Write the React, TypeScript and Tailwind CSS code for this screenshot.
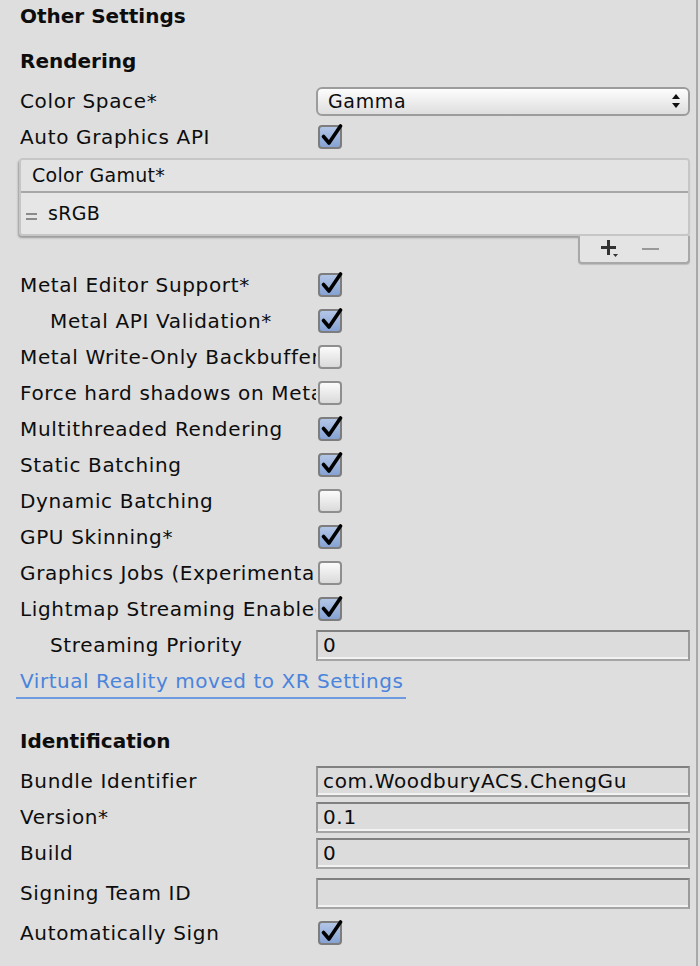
import React from "react";

const font = { fontFamily: '"DejaVu Sans", "Liberation Sans", sans-serif' };

function Check({ on }: { on: boolean }) {
  return (
    <div className="relative w-[24px] h-[24px]">
      <div
        className={
          on
            ? "w-[24px] h-[24px] rounded-[4px] border-2 border-[#7d7d7d] bg-gradient-to-b from-[#b3c6e6] to-[#86a2d3]"
            : "w-[24px] h-[24px] rounded-[4px] border-2 border-[#8e8e8e] bg-gradient-to-b from-[#fbfbfb] to-[#dadada]"
        }
      />
      {on && (
        <svg className="absolute left-[3px] top-[-2px]" width="24" height="24" viewBox="0 0 24 24">
          <path d="M2.5 13.5 L8 20 L19.5 3" fill="none" stroke="#000" strokeWidth="3.6" strokeLinecap="round" strokeLinejoin="round" />
        </svg>
      )}
    </div>
  );
}

function Label({ text, indent }: { text: string; indent?: boolean }) {
  return (
    <div className={"w-[296px] shrink-0 overflow-hidden whitespace-nowrap " + (indent ? "pl-[30px]" : "")}>
      {text}
    </div>
  );
}

function CheckRow({ label, on, indent }: { label: string; on: boolean; indent?: boolean }) {
  return (
    <div className="h-[36px] flex items-center pl-[20px]">
      <Label text={label} indent={indent} />
      <div className="pl-[2px]">
        <Check on={on} />
      </div>
    </div>
  );
}

function Field({ value }: { value: string }) {
  return (
    <div className="w-[374px] h-[31px] border-2 border-t-[#808080] border-x-[#9a9a9a] border-b-[#a5a5a5] bg-[#dcdcdc] shadow-[inset_0_-2px_0_#f2f2f2] flex items-center pl-[5px] overflow-hidden whitespace-nowrap">
      {value}
    </div>
  );
}

function FieldRow({ label, value, indent }: { label: string; value: string; indent?: boolean }) {
  return (
    <div className="h-[36px] flex items-center pl-[20px]">
      <Label text={label} indent={indent} />
      <Field value={value} />
    </div>
  );
}

export default function App() {
  return (
    <div className="w-[700px] h-[966px] bg-[#dedede] text-[#0d0d0d] text-[20px] tracking-[0.65px] relative overflow-hidden" style={font}>
      <div className="absolute right-[2px] top-0 bottom-0 w-[2px] bg-[#a9a9a9]" />
      <div className="h-[32px] flex items-center pl-[20px] font-bold tracking-[0px]">Other Settings</div>
      <div className="h-[36px] mt-[11px] flex items-center pl-[20px] font-bold tracking-[0px]">Rendering</div>

      <div className="h-[36px] mt-[4px] flex items-center pl-[20px]">
        <Label text="Color Space*" />
        <div className="w-[374px] h-[29px] rounded-[6px] border-2 border-[#9c9c9c] bg-gradient-to-b from-[#fdfdfd] to-[#dedede] flex items-center pl-[10px] pr-[8px]">
          <span className="flex-1 text-[19px]">Gamma</span>
          <svg width="8" height="14" viewBox="0 0 8 14">
            <path d="M4 0 L8 5 L0 5 Z" fill="#111" />
            <path d="M4 14 L8 9 L0 9 Z" fill="#111" />
          </svg>
        </div>
      </div>
      <CheckRow label="Auto Graphics API" on />

      <div className="mt-[3px] ml-[19px] w-[671px]">
        <div className="rounded-[4px] border-2 border-[#c6c6c6] shadow-[-1px_2px_2px_rgba(0,0,0,0.3)] overflow-hidden">
          <div className="h-[33px] bg-[#e3e3e3] border-b-2 border-[#a7a7a7] flex items-center pl-[11px] text-[19px] tracking-[0.3px]">Color Gamut*</div>
          <div className="h-[41px] bg-[#e6e6e6] flex items-center pl-[5px] text-[19px] tracking-[0.3px]">
            <div className="flex flex-col gap-[3px] mr-[11px] mt-[6px]">
              <div className="w-[11px] h-[2px] bg-[#8a8a8a]" />
              <div className="w-[11px] h-[2px] bg-[#8a8a8a]" />
            </div>
            sRGB
          </div>
        </div>
        <div className="flex justify-end">
          <div className="w-[112px] h-[28px] bg-[#e4e4e4] border-2 border-t-0 border-[#a8a8a8] rounded-b-[4px] shadow-[0_1px_1px_rgba(0,0,0,0.15)] flex items-center">
            <svg className="ml-[20px]" width="20" height="20" viewBox="0 0 20 20">
              <path d="M7 1 h3 v6 h6 v3 h-6 v6 h-3 v-6 h-6 v-3 h6 Z" fill="#333" />
              <path d="M13 15 h5 l-2.5 3 Z" fill="#333" />
            </svg>
            <div className="ml-[22px] w-[17px] h-[2px] bg-[#999]" />
          </div>
        </div>
      </div>

      <div className="mt-[3px]">
        <CheckRow label="Metal Editor Support*" on />
        <CheckRow label="Metal API Validation*" on indent />
        <CheckRow label="Metal Write-Only Backbuffer" on={false} />
        <CheckRow label="Force hard shadows on Metal" on={false} />
        <CheckRow label="Multithreaded Rendering" on />
        <CheckRow label="Static Batching" on />
        <CheckRow label="Dynamic Batching" on={false} />
        <CheckRow label="GPU Skinning*" on />
        <CheckRow label="Graphics Jobs (Experimental)" on={false} />
        <CheckRow label="Lightmap Streaming Enabled" on />
        <FieldRow label="Streaming Priority" value="0" indent />
        <div className="h-[36px] flex items-center">
          <span className="ml-[16px] pl-[4px] pr-[2px] border-b-2 border-[#6f9ae0] text-[#4a84dc] leading-[31px] mt-[3px] tracking-[0.55px]">
            Virtual Reality moved to XR Settings
          </span>
        </div>
      </div>

      <div className="h-[36px] mt-[24px] flex items-center pl-[20px] font-bold tracking-[0px]">Identification</div>
      <div className="mt-[4px]">
        <FieldRow label="Bundle Identifier" value="com.WoodburyACS.ChengGu" />
        <FieldRow label="Version*" value="0.1" />
        <FieldRow label="Build" value="0" />
        <div className="mt-[4px]">
          <FieldRow label="Signing Team ID" value="" />
        </div>
        <div className="mt-[4px]">
          <CheckRow label="Automatically Sign" on />
        </div>
      </div>
    </div>
  );
}
